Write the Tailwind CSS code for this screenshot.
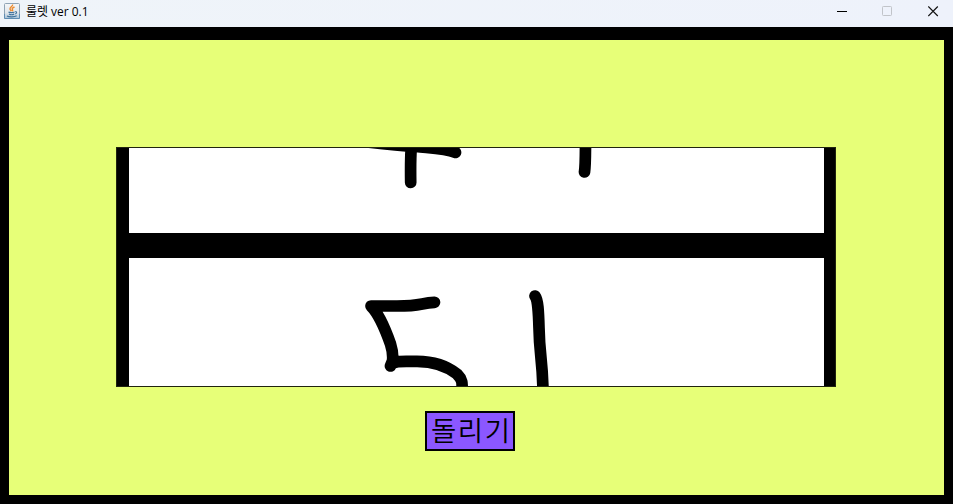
<!DOCTYPE html>
<html lang="ko">
<head>
<meta charset="utf-8">
<title>룰렛 ver 0.1</title>
<script src="https://cdn.jsdelivr.net/npm/@tailwindcss/browser@4"></script>
</head>
<body class="flex h-[504px] w-[953px] flex-col overflow-hidden bg-black font-['Noto_Sans','Noto_Sans_CJK_KR',sans-serif] text-black">
  <header class="flex h-[27px] shrink-0 items-center bg-gradient-to-r from-[#eff4f9] to-[#eef2fb]">
    <svg class="ml-1 -mt-[5px] size-4 shrink-0" viewBox="0 0 16 16" fill="none">
      <defs><linearGradient id="g" x1="0" y1="0" x2="0" y2="1"><stop stop-color="#f5f6f7"/><stop offset=".6" stop-color="#e1e7ec"/><stop offset="1" stop-color="#a9c3d8"/></linearGradient></defs>
      <rect x=".5" y=".5" width="15" height="15" rx="1" fill="url(#g)" stroke="#8fa3b5"/>
      <path d="M.5 11v4.500h15V11" stroke="#5f8db3"/>
      <path d="M8.600 1.500C9 3.500 5.500 4.200 6 6.200c.2.800 1.100 1.300 1.500 2M10.500 4C8.500 4.800 7.600 5.500 8.500 6.700c.4.600.2 1-.3 1.600" stroke="#ee8a2c" stroke-width="1.400"/>
      <path d="M4.500 9c1 .8 4.500.8 6 0M5 11c1.200.7 4 .7 5.200 0M3 13c2 1.200 7.500 1.200 9.700-.2M11 8.800c2-.6 2.300 1.400.2 2.200" stroke="#3f729c" stroke-width="1.100"/>
    </svg>
    <h1 class="-mt-[4px] ml-[6px] w-[66px] whitespace-nowrap"><svg class="block h-[18px] w-[66px] overflow-visible" viewBox="0 0 66 18"><text x="0" y="13" font-size="12" textLength="62.500" lengthAdjust="spacingAndGlyphs" font-family="'Open Sans','Noto Sans CJK KR',sans-serif">룰렛 ver 0.1</text></svg></h1>
    <div class="-mt-[5px] ml-auto mr-[14px] flex items-center gap-[35px]">
      <svg class="size-[11px]" viewBox="0 0 11 11"><path d="M1 5.500h10" stroke="#000"/></svg>
      <svg class="size-[11px]" viewBox="0 0 11 11"><rect x=".5" y=".5" width="9" height="9" rx=".8" fill="none" stroke="#c1c4c9"/></svg>
      <svg class="size-[11px]" viewBox="0 0 11 11"><path d="m.3.500 9.500 9.500M9.800.5.300 10" stroke="#111" stroke-width="1.150"/></svg>
    </div>
  </header>
  <main class="mx-[9px] mb-[9px] mt-[13px] flex min-h-0 flex-1 flex-col bg-[#e7ff78] pl-[107px] pt-[107px]">
    <section class="h-[240px] w-[720px] border border-[#20240f] bg-black">
      <svg class="block h-[238px] w-[718px]" viewBox="117 148 718 238" fill="none" stroke="#000" stroke-width="11.700" stroke-linecap="round" stroke-linejoin="round">
        <path d="M129 148h695v85H129zM129 258h695v129H129z" fill="#fff" stroke="none"/>
        <path d="M363 141.500C385 144 400 145.500 416 146.500C432 148 446 148 455.500 152.500M411.500 145C410.500 155 410.500 170 410.700 182.500M585.500 140C585.500 155 585.500 166 584.500 172"/>
        <path d="M434.500 302.300C420 303 422 306 397 306H371C380 315 387 334 390.500 344C393 352 393 357 392.500 361L390.500 366C393 360 400 361.500 417 361.300C440 361.500 452 370 457 374C462 379 463 383 461.500 391M535 296C538 300 538.500 311 539 328C539.500 356 542.500 359 543 391"/>
      </svg>
    </section>
    <button class="ml-[309px] mt-6 flex h-10 w-[90px] items-center justify-center border-2 border-black bg-[#8b57ff]">
      <svg class="block h-9 w-[86px] overflow-visible" viewBox="0 0 86 36"><text x="4" y="28" font-size="27.500" textLength="79" lengthAdjust="spacing" font-family="'Noto Sans CJK KR DemiLight','Noto Sans CJK KR',sans-serif" font-weight="350">돌리기</text></svg>
    </button>
  </main>
</body>
</html>
